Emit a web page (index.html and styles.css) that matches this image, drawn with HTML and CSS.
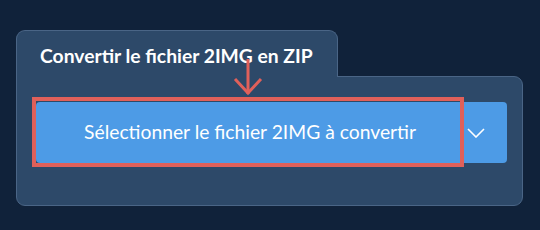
FILE: index.html
```html
<!DOCTYPE html>
<html>
<head>
    <title>Convertir 2IMG en ZIP</title>
    <meta charset="utf-8">
    <link rel="stylesheet" href="styles.css">
</head>
<body>

<div class="converter">
    <div class="tab">Convertir le fichier 2IMG en ZIP</div>

    <div class="panel">
        <div class="button-group">
            <div class="main-wrap">
                <button class="main-button">Sélectionner le fichier 2IMG à convertir</button>
                <div class="highlight"></div>
            </div>
            <button class="drop-button">
                <svg width="18" height="10" viewBox="0 0 18 10">
                    <polyline points="1,1 9,9 17,1" fill="none" stroke="#ffffff" stroke-width="1.6"/>
                </svg>
            </button>
        </div>
    </div>

    <svg class="pointer" width="32" height="42" viewBox="0 0 32 42">
        <line x1="16" y1="2" x2="16" y2="37" stroke="#e0605a" stroke-width="3"/>
        <polyline points="3,22 16,36 29,22" fill="none" stroke="#e0605a" stroke-width="3"/>
    </svg>
</div>

</body>
</html>
```

FILE: styles.css
```css
body {
    margin: 0px;
    background-color: #10223a;
    font-family: Lato, "Liberation Sans", sans-serif;
}

.converter {
    position: relative;
    margin-left: 16px;
    margin-top: 30px;
    width: 507px;
}

.tab {
    display: inline-block;
    box-sizing: border-box;
    width: 322px;
    height: 47px;
    padding: 13px 0px 0px 23px;
    background-color: #2d4969;
    border: 1px solid #4a6586;
    border-bottom: none;
    border-radius: 9px 9px 0px 0px;
    color: #ffffff;
    font-weight: bold;
    font-size: 19.3px;
    position: relative;
    z-index: 1;
    margin-bottom: -1px;
}

.panel {
    box-sizing: border-box;
    width: 507px;
    height: 130px;
    padding: 25px 15px 0px 19px;
    background-color: #2d4969;
    border: 1px solid #4a6586;
    border-radius: 0px 9px 9px 9px;
}

.button-group {
    display: flex;
    height: 61px;
}

.main-wrap {
    position: relative;
    width: 429px;
}

.main-button, .drop-button {
    border: none;
    background-color: #4d9be6;
    color: #ffffff;
    font-family: Lato, "Liberation Sans", sans-serif;
    height: 61px;
    padding: 0px;
}

.main-button {
    width: 100%;
    font-size: 19.3px;
    border-radius: 4px 0px 0px 4px;
    padding-bottom: 2px;
}

.drop-button {
    width: 43px;
    border-radius: 0px 4px 4px 0px;
    display: flex;
    align-items: center;
    padding-left: 3px;
}

.highlight {
    position: absolute;
    top: -5px;
    left: -4px;
    right: 0px;
    bottom: -4px;
    border: 4px solid #e0605a;
}

.pointer {
    position: absolute;
    left: 216px;
    top: 27px;
    z-index: 2;
}
```
